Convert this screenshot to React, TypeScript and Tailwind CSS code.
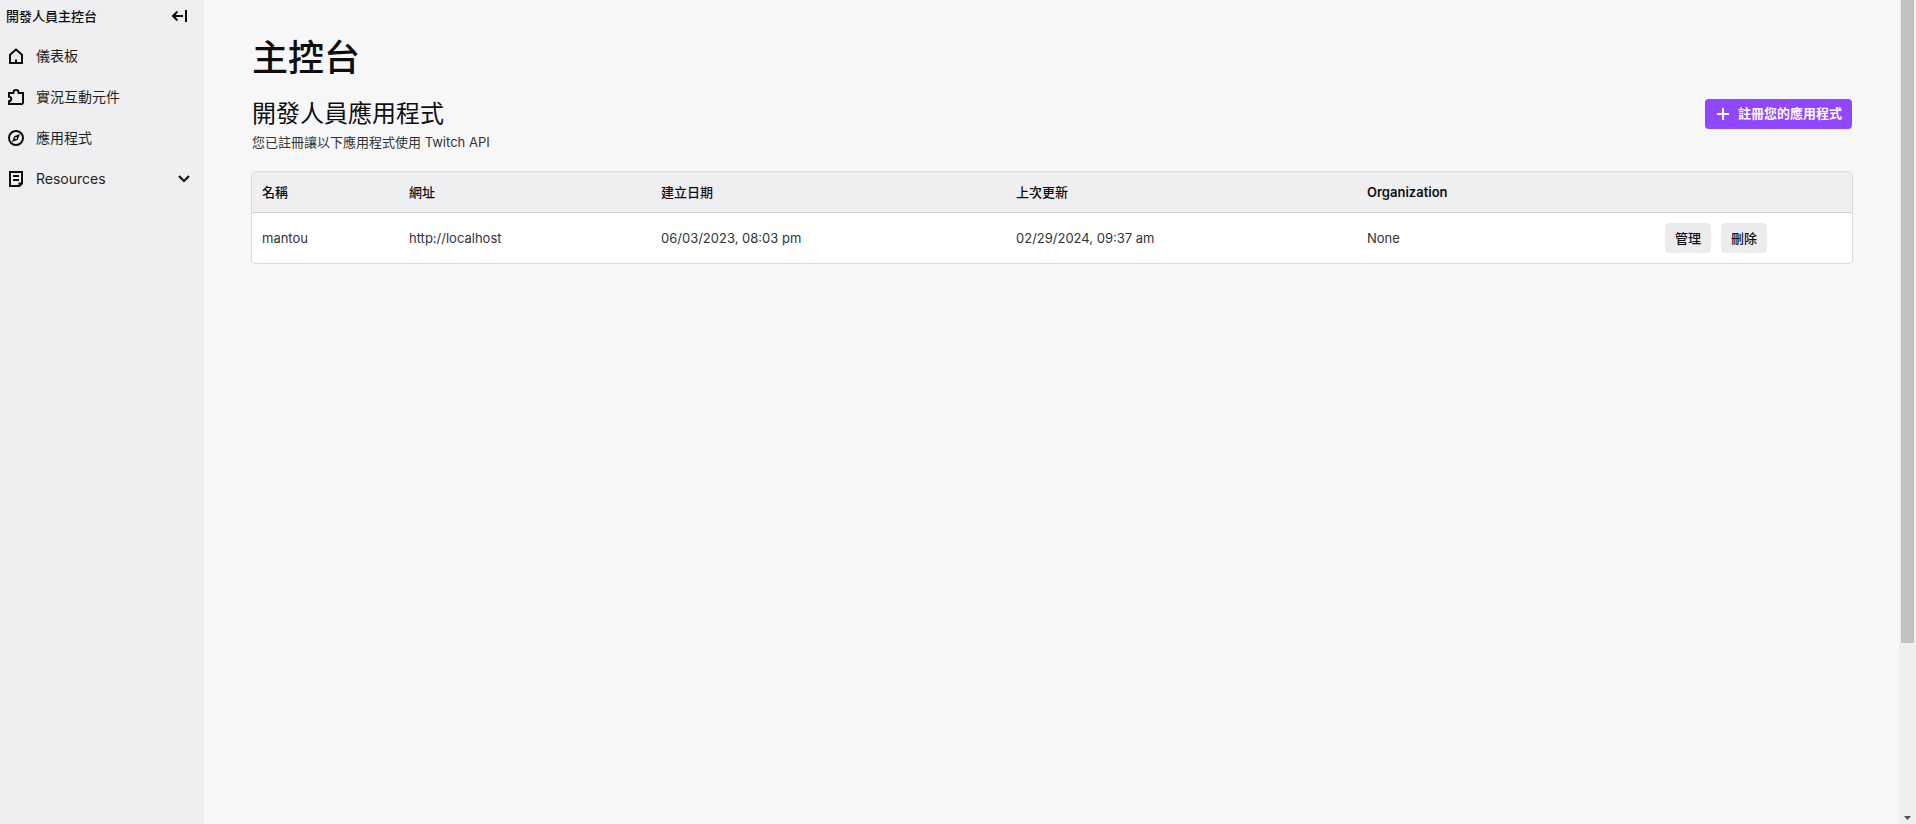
import type { ReactNode } from 'react';

type Item = { label: string; icon: ReactNode; expandable?: boolean };

const iconProps = {
  viewBox: '0 0 20 20',
  className: 'size-5 shrink-0',
  fill: 'none',
  stroke: 'currentColor',
  strokeWidth: 2,
  'aria-hidden': true,
};

function HomeIcon() {
  return (
    <svg {...iconProps}>
      <path d="M4 8.800l6-5.300 6 5.300V17H4z" />
      <path d="M10 13.500V17" />
    </svg>
  );
}

function ExtensionIcon() {
  return (
    <svg {...iconProps}>
      <path d="M3 6h4.500V5a2.500 2 0 0 1 5 0v1H17v10l-1 1H3v-2.800c3-.2 3-4.200 0-4.400z" />
    </svg>
  );
}

function CompassIcon() {
  return (
    <svg {...iconProps}>
      <circle cx="10" cy="10" r="7" />
      <path
        d="M14 6l-2.200 5.800L6 14l2.200-5.800zM10 9a1 1 0 1 0 0 2 1 1 0 0 0 0-2z"
        fill="currentColor"
        fillRule="evenodd"
        stroke="none"
      />
    </svg>
  );
}

function ResourcesIcon() {
  return (
    <svg {...iconProps}>
      <path d="M4 3h12v11.500L13.500 17H4z" />
      <path d="M7 7h6M7 11h6" />
      <path d="M16 13.500h-3.500V17z" fill="currentColor" stroke="none" />
    </svg>
  );
}

function CollapseIcon() {
  return (
    <svg {...iconProps}>
      <path d="M17 4v12M14 10H4M8.500 5.500L4 10l4.500 4.500" />
    </svg>
  );
}

function ChevronIcon() {
  return (
    <svg {...iconProps}>
      <path d="M5 7l5 5 5-5" />
    </svg>
  );
}

function PlusIcon() {
  return (
    <svg {...iconProps}>
      <path d="M10 4v12M4 10h12" />
    </svg>
  );
}

const items: Item[] = [
  { label: '儀表板', icon: <HomeIcon /> },
  { label: '實況互動元件', icon: <ExtensionIcon /> },
  { label: '應用程式', icon: <CompassIcon /> },
  { label: 'Resources', icon: <ResourcesIcon />, expandable: true },
];

const apps = [
  {
    name: 'mantou',
    url: 'http://localhost',
    created: '06/03/2023, 08:03 pm',
    updated: '02/29/2024, 09:37 am',
    organization: 'None',
  },
];

function Sidebar() {
  return (
    <aside className="w-[204px] shrink-0 bg-[#efeff1]">
      <div className="flex h-8 items-center justify-between pr-[15px] pl-1.5">
        <h2 className="text-[13px] leading-5 font-medium">開發人員主控台</h2>
        <button type="button" aria-label="收合" className="flex">
          <CollapseIcon />
        </button>
      </div>
      <nav className="flex flex-col gap-px pt-1">
        {items.map((item) => (
          <a key={item.label} href="#" className="flex h-10 items-center gap-2.5 px-1.5 text-sm text-[#1f1f23]">
            <span className="text-[#0e0e10]">{item.icon}</span>
            <span className="grow">{item.label}</span>
            {item.expandable && (
              <span className="pr-1 text-[#0e0e10]">
                <ChevronIcon />
              </span>
            )}
          </a>
        ))}
      </nav>
    </aside>
  );
}

function AppsTable() {
  return (
    <div className="mt-[19px] overflow-hidden rounded border border-[#dcdce0] bg-white">
      <table className="w-full table-fixed text-left text-[13px] leading-5">
        <colgroup>
          <col className="w-[147px]" />
          <col className="w-[252px]" />
          <col className="w-[355px]" />
          <col className="w-[351px]" />
          <col className="w-[298px]" />
          <col />
        </colgroup>
        <thead>
          <tr className="h-10 border-b border-[#d0d0d6] bg-[#efeff1]">
            <th className="px-2.5 font-medium">名稱</th>
            <th className="px-2.5 font-medium">網址</th>
            <th className="px-2.5 font-medium">建立日期</th>
            <th className="px-2.5 font-medium">上次更新</th>
            <th className="px-2.5 font-semibold">Organization</th>
            <td />
          </tr>
        </thead>
        <tbody>
          {apps.map((app) => (
            <tr key={app.name} className="text-[#323239]">
              <td className="px-2.5">{app.name}</td>
              <td className="px-2.5">{app.url}</td>
              <td className="px-2.5">{app.created}</td>
              <td className="px-2.5">{app.updated}</td>
              <td className="px-2.5">{app.organization}</td>
              <td className="p-2.5">
                <div className="flex gap-2.5 font-medium text-[#0e0e10]">
                  <button type="button" className="h-[30px] rounded bg-[#ececee] px-2.5">
                    管理
                  </button>
                  <button type="button" className="h-[30px] rounded bg-[#ececee] px-2.5">
                    刪除
                  </button>
                </div>
              </td>
            </tr>
          ))}
        </tbody>
      </table>
    </div>
  );
}

function Scrollbar() {
  return (
    <div aria-hidden="true" className="flex w-[17px] shrink-0 flex-col items-center justify-between bg-[#f0f0f0]">
      <div className="h-[78vh] w-[13px] bg-[#c1c1c1]" />
      <svg viewBox="0 0 7 4" className="mb-1 h-1 w-[7px]" fill="#505050">
        <path d="M0 0h7L3.500 4z" />
      </svg>
    </div>
  );
}

export default function App() {
  return (
    <div className="flex min-h-screen bg-[#f7f7f8] font-[Inter,'Noto_Sans_CJK_TC',sans-serif] text-[#0e0e10]">
      <Sidebar />
      <main className="min-w-0 grow pt-8 pr-[46px] pl-[47px]">
        <h1 className="pl-px text-4xl leading-[52px] font-medium">主控台</h1>
        <div className="mt-3 flex items-start justify-between">
          <div className="pl-px">
            <h2 className="text-2xl leading-9">開發人員應用程式</h2>
            <p className="text-[13px] leading-5 text-[#323239]">您已註冊讓以下應用程式使用 Twitch API</p>
          </div>
          <button
            type="button"
            className="mt-[3px] mr-px flex h-[30px] items-center gap-[5px] rounded bg-[#9147ff] pr-2.5 pl-2 text-[13px] font-bold text-white"
          >
            <PlusIcon />
            註冊您的應用程式
          </button>
        </div>
        <AppsTable />
      </main>
      <Scrollbar />
    </div>
  );
}
